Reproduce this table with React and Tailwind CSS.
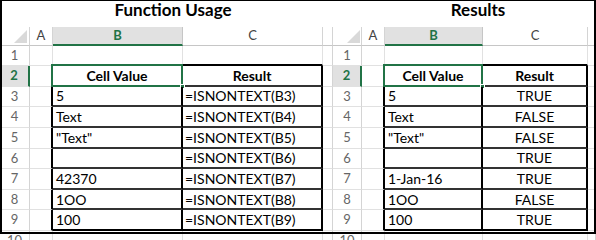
import React from "react";

const GREEN = "#217346";

const leftData = [
  ["", ""],
  ["Cell Value", "Result"],
  ["5", "=ISNONTEXT(B3)"],
  ["Text", "=ISNONTEXT(B4)"],
  ['"Text"', "=ISNONTEXT(B5)"],
  ["", "=ISNONTEXT(B6)"],
  ["42370", "=ISNONTEXT(B7)"],
  ["1OO", "=ISNONTEXT(B8)"],
  ["100", "=ISNONTEXT(B9)"],
  ["", ""],
];

const rightData = [
  ["", ""],
  ["Cell Value", "Result"],
  ["5", "TRUE"],
  ["Text", "FALSE"],
  ['"Text"', "FALSE"],
  ["", "TRUE"],
  ["1-Jan-16", "TRUE"],
  ["1OO", "FALSE"],
  ["100", "TRUE"],
  ["", ""],
];

function Corner() {
  return (
    <div className="bg-white border-r border-b border-r-[#d4d4d4] border-b-[#c6c6c6] relative">
      <svg width="30" height="19" className="block">
        <polygon points="27,3 27,16 14,16" fill="#d9d9d9" />
      </svg>
    </div>
  );
}

function Panel({ title, titleClass, colsClass, data, centerC }) {
  const cells = [];
  data.forEach((row, i) => {
    const r = i + 1;
    const inTable = r >= 2 && r <= 9;
    const isHead = r === 2;
    // row number
    cells.push(
      <div
        key={`rn${r}`}
        className={
          "flex items-center justify-center text-[13px] border-b border-b-[#e1e1e1] " +
          (isHead
            ? "bg-[#e1e1e1] text-[#217346] font-bold border-r-2 border-r-[#217346]"
            : "bg-white text-[#666666] border-r border-r-[#d4d4d4]")
        }
      >
        {r}
      </div>
    );
    // column A
    cells.push(
      <div
        key={`a${r}`}
        className={
          "border-b border-b-[#e1e1e1] " +
          (inTable ? "border-r-2 border-r-black" : "border-r border-r-[#e1e1e1]")
        }
      />
    );
    const bottom =
      r === 1 || r === 9
        ? "border-b-2 border-b-black"
        : inTable
        ? "border-b-2 border-b-[#333333]"
        : "border-b border-b-[#e1e1e1]";
    const right = inTable ? "border-r-2 border-r-black" : "border-r border-r-[#e1e1e1]";
    // column B
    cells.push(
      <div
        key={`b${r}`}
        className={
          "relative flex items-center whitespace-nowrap text-[14px] text-black " +
          bottom +
          " " +
          right +
          (isHead ? " justify-center font-bold" : " pl-[3px]")
        }
      >
        {row[0]}
        {isHead && (
          <>
            <div className="absolute left-[-2px] top-[-2px] right-[-2px] bottom-[-2px] border-2 border-[#217346] pointer-events-none" />
            <div className="absolute right-[-4px] bottom-[-4px] w-[5px] h-[5px] bg-[#217346] border border-white pointer-events-none" />
          </>
        )}
      </div>
    );
    // column C
    cells.push(
      <div
        key={`c${r}`}
        className={
          "flex items-center whitespace-nowrap text-[14px] text-black " +
          bottom +
          " " +
          right +
          (isHead ? " justify-center font-bold" : centerC ? " justify-center" : " pl-[2px]")
        }
      >
        {row[1]}
      </div>
    );
    // column D
    cells.push(
      <div key={`d${r}`} className="border-b border-b-[#e1e1e1] border-r border-r-[#d4d4d4]" />
    );
  });

  return (
    <div className="flex flex-col">
      <div className={"h-[27px] leading-[20px] text-[17px] font-bold text-black text-center " + titleClass}>
        {title}
      </div>
      <div className={"grid grid-rows-[19px_20px_repeat(8,20.625px)_20px] " + colsClass}>
        <Corner />
        <div className="flex items-center justify-center text-[13px] text-[#444444] bg-white border-r border-r-[#d4d4d4] border-b border-b-[#c6c6c6]">
          A
        </div>
        <div className="flex items-center justify-center text-[13px] font-bold text-[#217346] bg-[#e1e1e1] border-r border-r-[#c6c6c6] border-b-2 border-b-[#217346]">
          B
        </div>
        <div className="flex items-center justify-center text-[13px] text-[#444444] bg-white border-r border-r-[#d4d4d4] border-b border-b-[#c6c6c6]">
          C
        </div>
        <div className="bg-white border-r border-r-[#d4d4d4] border-b border-b-[#c6c6c6]" />
        {cells}
      </div>
    </div>
  );
}

export default function App() {
  return (
    <div className="relative w-[596px] h-[240px] overflow-hidden bg-white [font-family:Lato,'Liberation_Sans',sans-serif]">
      <div className="flex">
        <div className="w-[333px] shrink-0">
          <Panel
            title="Function Usage"
            titleClass="pl-[13px]"
            colsClass="grid-cols-[30px_23px_130px_140px_10px]"
            data={leftData}
            centerC={false}
          />
        </div>
        <div className="w-[263px] shrink-0">
          <Panel
            title="Results"
            titleClass="pl-[27px]"
            colsClass="grid-cols-[29px_23px_98px_105px_8px]"
            data={rightData}
            centerC={true}
          />
        </div>
      </div>
      <div className="absolute left-0 top-0 w-[596px] h-[234px] border-t border-l-2 border-r-2 border-b-2 border-black pointer-events-none" />
    </div>
  );
}
